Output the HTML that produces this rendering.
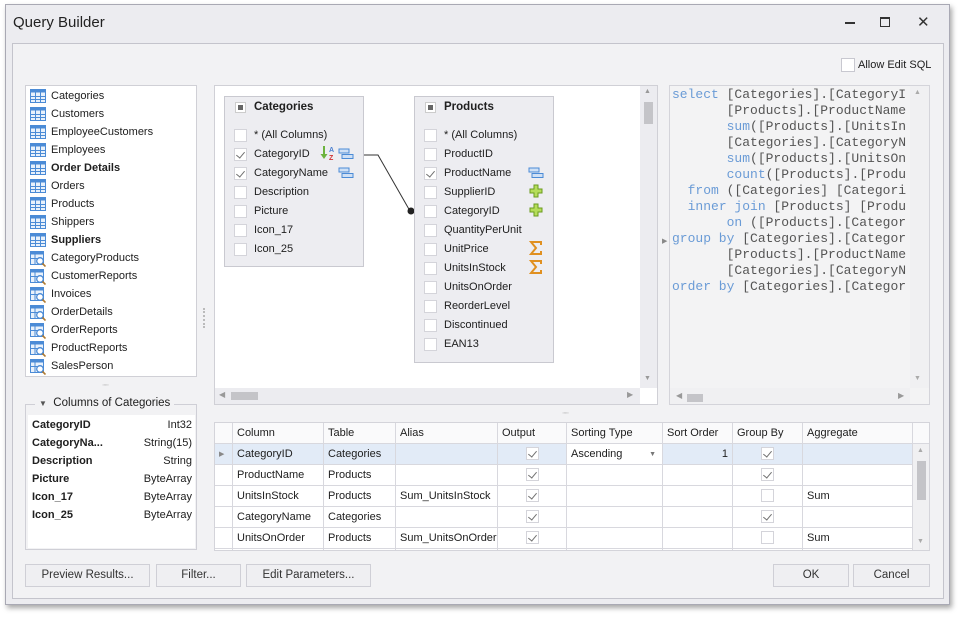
<!DOCTYPE html>
<html><head><meta charset="utf-8"><style>
*{box-sizing:border-box;margin:0;padding:0}
body{width:961px;height:618px;background:#fff;font-family:"Liberation Sans",sans-serif;font-size:11px;color:#202020;position:relative;overflow:hidden}
.a{position:absolute}
.win{left:5px;top:4px;width:945px;height:601px;background:#ececf0;border:1px solid #a9a9b4;box-shadow:2px 3px 5px rgba(0,0,0,.35)}
.inner{left:12px;top:43px;width:932px;height:556px;border:1px solid #c4c4cc;background:#f2f2f4}
.panel{background:#fff;border:1px solid #d0d0d6}
.li{position:absolute;left:4px;height:18px;line-height:18px;white-space:nowrap}
.li svg{position:absolute;left:0;top:2px}
.li span{position:absolute;left:21px}
.box{background:#ededf1;border:1px solid #c9c9d0}
.row{position:absolute;left:9px;height:19px;line-height:19px;white-space:nowrap}
.cb{position:absolute;width:13px;height:13px;border:1px solid #d4d4da;background:#fff}
.ck:after{content:"";position:absolute;left:3px;top:1px;width:4px;height:7px;border:solid #707070;border-width:0 1.3px 1.3px 0;transform:rotate(40deg)}
.sql{font-family:"Liberation Mono",monospace;font-size:13px;color:#555;white-space:pre;line-height:16px}
.k{color:#6a9bd6}
.btn{position:absolute;top:564px;height:23px;border:1px solid #cfcfd6;background:#efeff2;text-align:center;line-height:21px;font-size:11.5px;color:#333}
table{border-collapse:collapse;position:absolute;left:0;top:0;table-layout:fixed;width:716px}
td{border:1px solid #d8d8de;height:21px;padding:0 4px;white-space:nowrap;font-size:11px;overflow:hidden}
.sb{background:#ececf0}
</style></head><body>
<div class="a win"></div>
<div class="a" style="left:13px;top:14px;font-size:15px;color:#222">Query Builder</div>
<div class="a" style="left:845px;top:22px;width:10px;height:2px;background:#333"></div>
<div class="a" style="left:880px;top:17px;width:10px;height:10px;border:1px solid #333;border-top-width:2px"></div>
<div class="a" style="left:917px;top:13px;font-size:15px;color:#333">✕</div>
<div class="a inner"></div>

<div class="a" style="left:841px;top:58px;width:14px;height:14px;border:1px solid #c8c8d0;background:#fff"></div>
<div class="a" style="left:858px;top:59px;font-size:11px">Allow Edit SQL</div>

<!-- left list -->
<div class="a panel" style="left:25px;top:85px;width:172px;height:292px">
<svg width="0" height="0" style="position:absolute"><defs>
<g id="t"><rect x="0.5" y="0.5" width="15" height="13" fill="#e8f1fb" stroke="#4b8bd6"/><rect x="0.5" y="0.5" width="15" height="3" fill="#4b8bd6"/><path d="M0 7.5H16M0 10.5H16M5.5 3V14M10.5 3V14" stroke="#4b8bd6"/></g>
<g id="v"><rect x="0.5" y="0.5" width="13" height="13" fill="#e8f1fb" stroke="#4b8bd6"/><rect x="0.5" y="0.5" width="13" height="3" fill="#4b8bd6"/><path d="M0 7.5H8M5 3V14" stroke="#4b8bd6"/><circle cx="10" cy="10" r="3.3" fill="#fff" stroke="#4b8bd6" stroke-width="1.3"/><path d="M12.5 12.5L15.5 15.5" stroke="#b07a30" stroke-width="1.6"/></g>
</defs></svg>
<div class="li" style="top:1px"><svg width="16" height="16"><use href="#t"/></svg><span>Categories</span></div>
<div class="li" style="top:19px"><svg width="16" height="16"><use href="#t"/></svg><span>Customers</span></div>
<div class="li" style="top:37px"><svg width="16" height="16"><use href="#t"/></svg><span>EmployeeCustomers</span></div>
<div class="li" style="top:55px"><svg width="16" height="16"><use href="#t"/></svg><span>Employees</span></div>
<div class="li" style="top:73px"><svg width="16" height="16"><use href="#t"/></svg><span><b>Order Details</b></span></div>
<div class="li" style="top:91px"><svg width="16" height="16"><use href="#t"/></svg><span>Orders</span></div>
<div class="li" style="top:109px"><svg width="16" height="16"><use href="#t"/></svg><span>Products</span></div>
<div class="li" style="top:127px"><svg width="16" height="16"><use href="#t"/></svg><span>Shippers</span></div>
<div class="li" style="top:145px"><svg width="16" height="16"><use href="#t"/></svg><span><b>Suppliers</b></span></div>
<div class="li" style="top:163px"><svg width="16" height="16"><use href="#v"/></svg><span>CategoryProducts</span></div>
<div class="li" style="top:181px"><svg width="16" height="16"><use href="#v"/></svg><span>CustomerReports</span></div>
<div class="li" style="top:199px"><svg width="16" height="16"><use href="#v"/></svg><span>Invoices</span></div>
<div class="li" style="top:217px"><svg width="16" height="16"><use href="#v"/></svg><span>OrderDetails</span></div>
<div class="li" style="top:235px"><svg width="16" height="16"><use href="#v"/></svg><span>OrderReports</span></div>
<div class="li" style="top:253px"><svg width="16" height="16"><use href="#v"/></svg><span>ProductReports</span></div>
<div class="li" style="top:271px"><svg width="16" height="16"><use href="#v"/></svg><span>SalesPerson</span></div>
</div>
<div class="a" style="left:102px;top:380px;font-size:8px;color:#aaa;letter-spacing:-1px">∙∙∙∙∙</div>
<div class="a" style="left:203px;top:308px;width:3px;height:20px;border-left:2px dotted #bbb"></div>
<div class="a" style="left:562px;top:408px;font-size:8px;color:#aaa;letter-spacing:-1px">∙∙∙∙∙</div>

<!-- columns group -->
<div class="a" style="left:25px;top:404px;width:172px;height:146px;border:1px solid #cfcfd6"></div>
<div class="a" style="left:35px;top:397px;padding:0 4px;background:#f2f2f4;font-size:11.5px"><span style="font-size:8px;color:#555">▼</span>&nbsp; Columns of Categories</div>
<div class="a" style="left:28px;top:415px;width:167px;height:133px;background:#fff"></div>
<div class="a" style="left:32px;top:416px;width:160px;line-height:18px;font-family:'Liberation Sans',sans-serif">
<div style="display:flex;justify-content:space-between"><b>CategoryID</b><span>Int32</span></div>
<div style="display:flex;justify-content:space-between"><b>CategoryNa...</b><span>String(15)</span></div>
<div style="display:flex;justify-content:space-between"><b>Description</b><span>String</span></div>
<div style="display:flex;justify-content:space-between"><b>Picture</b><span>ByteArray</span></div>
<div style="display:flex;justify-content:space-between"><b>Icon_17</b><span>ByteArray</span></div>
<div style="display:flex;justify-content:space-between"><b>Icon_25</b><span>ByteArray</span></div>
</div>

<!-- diagram -->
<div class="a panel" style="left:214px;top:85px;width:444px;height:320px"></div>
<div class="a sb" style="left:640px;top:86px;width:17px;height:302px"></div>
<div class="a" style="left:644px;top:88px;font-size:7px;color:#999">▲</div>
<div class="a" style="left:644px;top:375px;font-size:7px;color:#999">▼</div>
<div class="a" style="left:644px;top:102px;width:9px;height:22px;background:#c4c4c8"></div>
<div class="a sb" style="left:215px;top:388px;width:425px;height:16px"></div>
<div class="a" style="left:219px;top:390px;font-size:8px;color:#999">◀</div>
<div class="a" style="left:627px;top:390px;font-size:8px;color:#999">▶</div>
<div class="a" style="left:231px;top:392px;width:27px;height:8px;background:#c4c4c8"></div>

<div class="a box" style="left:224px;top:96px;width:140px;height:171px">
<div class="a" style="left:10px;top:5px;width:11px;height:11px;border:1px solid #ccc;background:#fff"><div style="margin:2px;width:5px;height:5px;background:#666"></div></div>
<div class="a" style="left:29px;top:4px;font-weight:bold;font-size:11.5px">Categories</div>
<div class="row" style="top:29px"><div class="cb" style="top:3px"></div><span style="margin-left:20px">* (All Columns)</span></div>
<div class="row" style="top:48px"><div class="cb ck" style="top:3px"></div><span style="margin-left:20px">CategoryID</span></div>
<div class="row" style="top:67px"><div class="cb ck" style="top:3px"></div><span style="margin-left:20px">CategoryName</span></div>
<div class="row" style="top:86px"><div class="cb" style="top:3px"></div><span style="margin-left:20px">Description</span></div>
<div class="row" style="top:105px"><div class="cb" style="top:3px"></div><span style="margin-left:20px">Picture</span></div>
<div class="row" style="top:124px"><div class="cb" style="top:3px"></div><span style="margin-left:20px">Icon_17</span></div>
<div class="row" style="top:143px"><div class="cb" style="top:3px"></div><span style="margin-left:20px">Icon_25</span></div>
</div>
<svg class="a" style="left:320px;top:145px" width="20" height="18"><path d="M4 1V12" stroke="#6cb33e" stroke-width="2"/><path d="M0.5 9L4 14L7.5 9Z" fill="#6cb33e"/><text x="9" y="7" font-size="7" font-weight="bold" fill="#4a7fd0" font-family="Liberation Sans">A</text><text x="9" y="15" font-size="7" font-weight="bold" fill="#d03030" font-family="Liberation Sans">Z</text></svg>
<svg class="a" style="left:338px;top:148px" width="16" height="12"><rect x="1" y="1" width="10" height="4" fill="#cfe0f5" stroke="#4b8bd6"/><rect x="4" y="6.5" width="11" height="4" fill="#cfe0f5" stroke="#4b8bd6"/></svg>
<svg class="a" style="left:338px;top:167px" width="16" height="12"><rect x="1" y="1" width="10" height="4" fill="#cfe0f5" stroke="#4b8bd6"/><rect x="4" y="6.5" width="11" height="4" fill="#cfe0f5" stroke="#4b8bd6"/></svg>
<svg class="a" style="left:363px;top:150px" width="52" height="66"><path d="M1 5H15L47 61H52" stroke="#333" fill="none"/><circle cx="48" cy="61" r="3.5" fill="#222"/></svg>

<div class="a box" style="left:414px;top:96px;width:140px;height:267px">
<div class="a" style="left:10px;top:5px;width:11px;height:11px;border:1px solid #ccc;background:#fff"><div style="margin:2px;width:5px;height:5px;background:#666"></div></div>
<div class="a" style="left:29px;top:4px;font-weight:bold;font-size:11.5px">Products</div>
<div class="row" style="top:29px"><div class="cb" style="top:3px"></div><span style="margin-left:20px">* (All Columns)</span></div>
<div class="row" style="top:48px"><div class="cb" style="top:3px"></div><span style="margin-left:20px">ProductID</span></div>
<div class="row" style="top:67px"><div class="cb ck" style="top:3px"></div><span style="margin-left:20px">ProductName</span></div>
<div class="row" style="top:86px"><div class="cb" style="top:3px"></div><span style="margin-left:20px">SupplierID</span></div>
<div class="row" style="top:105px"><div class="cb" style="top:3px"></div><span style="margin-left:20px">CategoryID</span></div>
<div class="row" style="top:124px"><div class="cb" style="top:3px"></div><span style="margin-left:20px">QuantityPerUnit</span></div>
<div class="row" style="top:143px"><div class="cb" style="top:3px"></div><span style="margin-left:20px">UnitPrice</span></div>
<div class="row" style="top:162px"><div class="cb" style="top:3px"></div><span style="margin-left:20px">UnitsInStock</span></div>
<div class="row" style="top:181px"><div class="cb" style="top:3px"></div><span style="margin-left:20px">UnitsOnOrder</span></div>
<div class="row" style="top:200px"><div class="cb" style="top:3px"></div><span style="margin-left:20px">ReorderLevel</span></div>
<div class="row" style="top:219px"><div class="cb" style="top:3px"></div><span style="margin-left:20px">Discontinued</span></div>
<div class="row" style="top:238px"><div class="cb" style="top:3px"></div><span style="margin-left:20px">EAN13</span></div>
</div>
<svg class="a" style="left:528px;top:167px" width="16" height="12"><rect x="1" y="1" width="10" height="4" fill="#cfe0f5" stroke="#4b8bd6"/><rect x="4" y="6.5" width="11" height="4" fill="#cfe0f5" stroke="#4b8bd6"/></svg>
<svg class="a" style="left:529px;top:184px" width="14" height="14"><path d="M5 1H9V5H13V9H9V13H5V9H1V5H5Z" fill="#b5dd5a" stroke="#6a9a20"/></svg>
<svg class="a" style="left:529px;top:203px" width="14" height="14"><path d="M5 1H9V5H13V9H9V13H5V9H1V5H5Z" fill="#b5dd5a" stroke="#6a9a20"/></svg>
<svg class="a" style="left:529px;top:241px" width="14" height="14"><path d="M12 4V1H2L7 7L2 13H12V10" fill="none" stroke="#e09020" stroke-width="2"/></svg>
<svg class="a" style="left:529px;top:260px" width="14" height="14"><path d="M12 4V1H2L7 7L2 13H12V10" fill="none" stroke="#e09020" stroke-width="2"/></svg>

<!-- SQL -->
<div class="a" style="left:662px;top:237px;font-size:7px;color:#888">▶</div>
<div class="a" style="left:669px;top:85px;width:261px;height:320px;background:#f3f3f4;border:1px solid #d4d4da;overflow:hidden">
<div class="a sql" style="left:2px;top:1px"><span class="k">select</span> [Categories].[CategoryI
       [Products].[ProductName
       <span class="k">sum</span>([Products].[UnitsIn
       [Categories].[CategoryN
       <span class="k">sum</span>([Products].[UnitsOn
       <span class="k">count</span>([Products].[Produ
  <span class="k">from</span> ([Categories] [Categori
  <span class="k">inner join</span> [Products] [Produ
       <span class="k">on</span> ([Products].[Categor
<span class="k">group by</span> [Categories].[Categor
       [Products].[ProductName
       [Categories].[CategoryN
<span class="k">order by</span> [Categories].[Categor</div>
<div class="a" style="left:240px;top:0;width:20px;height:302px;background:#f0f0f2"></div>
<div class="a" style="left:244px;top:3px;font-size:7px;color:#aaa">▲</div>
<div class="a" style="left:244px;top:289px;font-size:7px;color:#aaa">▼</div>
<div class="a" style="left:0;top:302px;width:240px;height:17px;background:#f0f0f2"></div>
<div class="a" style="left:6px;top:305px;font-size:8px;color:#999">◀</div>
<div class="a" style="left:228px;top:305px;font-size:8px;color:#999">▶</div>
<div class="a" style="left:17px;top:308px;width:16px;height:8px;background:#c4c4c8"></div>
</div>

<!-- grid -->
<div class="a" style="left:214px;top:422px;width:716px;height:129px;background:#fff;border:1px solid #d4d4da;overflow:hidden">
<table style="left:-1px;top:-1px">
<colgroup><col style="width:18px"><col style="width:91px"><col style="width:72px"><col style="width:102px"><col style="width:69px"><col style="width:96px"><col style="width:70px"><col style="width:70px"><col style="width:110px"><col style="width:18px"></colgroup>
<tr style="background:#fafafb"><td></td><td>Column</td><td>Table</td><td>Alias</td><td>Output</td><td>Sorting Type</td><td>Sort Order</td><td>Group By</td><td>Aggregate</td><td></td></tr>
<tr style="background:#e2ebf7"><td style="font-size:7px;color:#888">▶</td><td>CategoryID</td><td>Categories</td><td></td><td style="position:relative"><div class="cb ck" style="left:28px;top:3px"></div></td><td style="position:relative;background:#fff">Ascending<span style="position:absolute;right:6px;font-size:7px;color:#777;top:7px">▼</span></td><td style="text-align:right">1</td><td style="position:relative"><div class="cb ck" style="left:28px;top:3px"></div></td><td></td><td rowspan="6" style="background:#f0f0f2;vertical-align:top;position:relative"></td></tr>
<tr><td></td><td>ProductName</td><td>Products</td><td></td><td style="position:relative"><div class="cb ck" style="left:28px;top:3px"></div></td><td></td><td></td><td style="position:relative"><div class="cb ck" style="left:28px;top:3px"></div></td><td></td></tr>
<tr><td></td><td>UnitsInStock</td><td>Products</td><td>Sum_UnitsInStock</td><td style="position:relative"><div class="cb ck" style="left:28px;top:3px"></div></td><td></td><td></td><td style="position:relative"><div class="cb" style="left:28px;top:3px"></div></td><td>Sum</td></tr>
<tr><td></td><td>CategoryName</td><td>Categories</td><td></td><td style="position:relative"><div class="cb ck" style="left:28px;top:3px"></div></td><td></td><td></td><td style="position:relative"><div class="cb ck" style="left:28px;top:3px"></div></td><td></td></tr>
<tr><td></td><td>UnitsOnOrder</td><td>Products</td><td>Sum_UnitsOnOrder</td><td style="position:relative"><div class="cb ck" style="left:28px;top:3px"></div></td><td></td><td></td><td style="position:relative"><div class="cb" style="left:28px;top:3px"></div></td><td>Sum</td></tr>
<tr><td></td><td></td><td></td><td></td><td></td><td></td><td></td><td></td><td></td></tr>
</table>
<div class="a" style="left:702px;top:24px;font-size:7px;color:#aaa">▲</div>
<div class="a" style="left:702px;top:38px;width:9px;height:39px;background:#c4c4c8"></div>
<div class="a" style="left:702px;top:115px;font-size:7px;color:#aaa">▼</div>
</div>

<div class="btn" style="left:25px;width:125px">Preview Results...</div>
<div class="btn" style="left:156px;width:85px">Filter...</div>
<div class="btn" style="left:246px;width:125px">Edit Parameters...</div>
<div class="btn" style="left:773px;width:76px">OK</div>
<div class="btn" style="left:853px;width:77px">Cancel</div>
</body></html>
